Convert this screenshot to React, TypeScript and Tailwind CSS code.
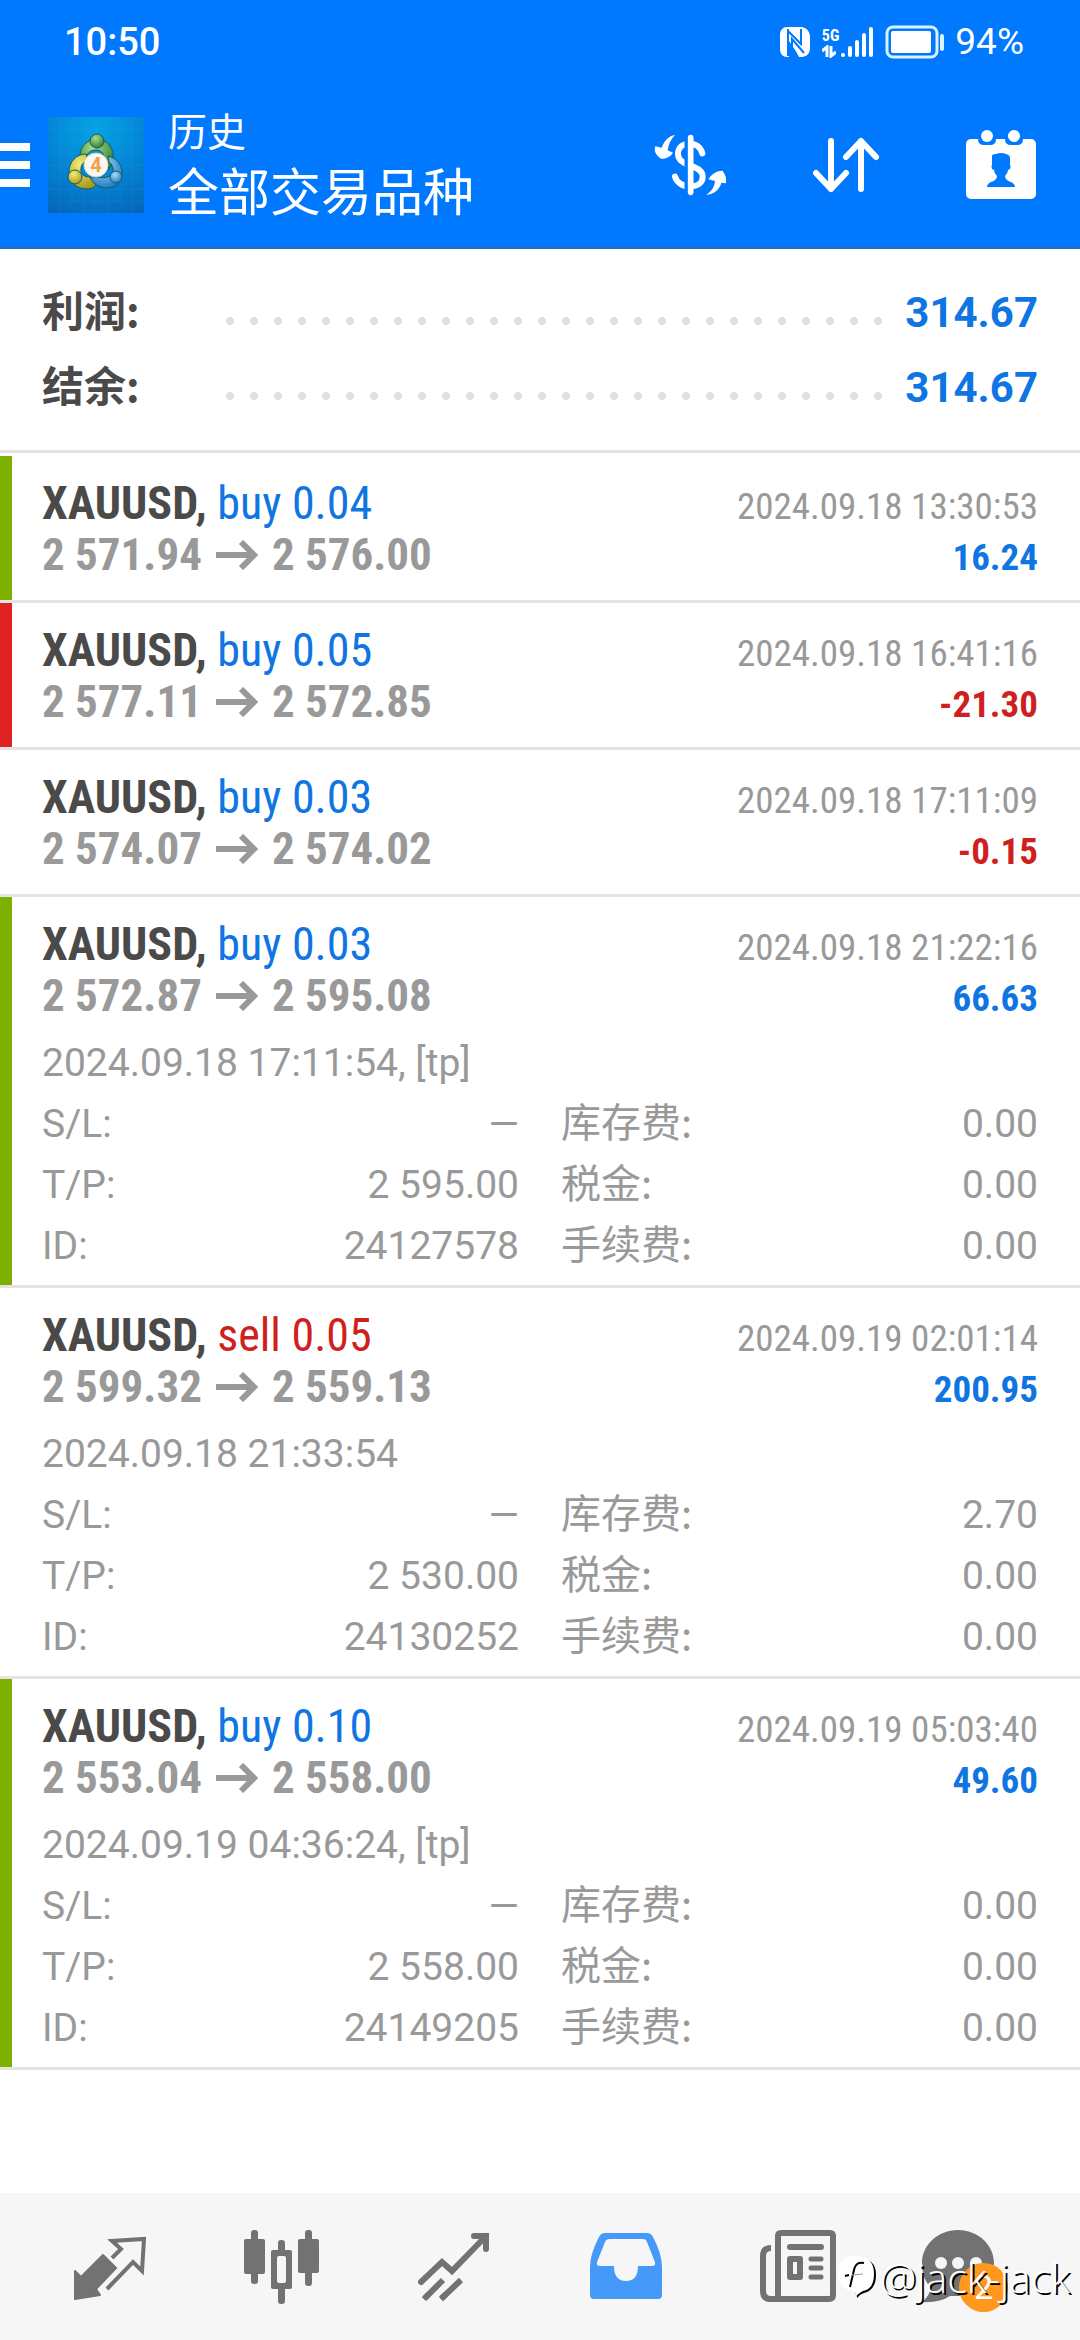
import type { ReactNode } from "react"

type Deal = {
  type: "buy" | "sell"
  volume: string
  open: string
  close: string
  closedAt: string
  profit: string
  mark?: "green" | "red"
  details?: {
    openedAt: string
    sl: string
    tp: string
    id: string
    swap: string
    tax: string
    commission: string
  }
}

const deals: Deal[] = [
  { type: "buy", volume: "0.04", open: "2 571.94", close: "2 576.00", closedAt: "2024.09.18 13:30:53", profit: "16.24", mark: "green" },
  { type: "buy", volume: "0.05", open: "2 577.11", close: "2 572.85", closedAt: "2024.09.18 16:41:16", profit: "-21.30", mark: "red" },
  { type: "buy", volume: "0.03", open: "2 574.07", close: "2 574.02", closedAt: "2024.09.18 17:11:09", profit: "-0.15" },
  {
    type: "buy", volume: "0.03", open: "2 572.87", close: "2 595.08", closedAt: "2024.09.18 21:22:16", profit: "66.63", mark: "green",
    details: { openedAt: "2024.09.18 17:11:54, [tp]", sl: "—", tp: "2 595.00", id: "24127578", swap: "0.00", tax: "0.00", commission: "0.00" },
  },
  {
    type: "sell", volume: "0.05", open: "2 599.32", close: "2 559.13", closedAt: "2024.09.19 02:01:14", profit: "200.95",
    details: { openedAt: "2024.09.18 21:33:54", sl: "—", tp: "2 530.00", id: "24130252", swap: "2.70", tax: "0.00", commission: "0.00" },
  },
  {
    type: "buy", volume: "0.10", open: "2 553.04", close: "2 558.00", closedAt: "2024.09.19 05:03:40", profit: "49.60", mark: "green",
    details: { openedAt: "2024.09.19 04:36:24, [tp]", sl: "—", tp: "2 558.00", id: "24149205", swap: "0.00", tax: "0.00", commission: "0.00" },
  },
]

const markColors = {
  green: "border-[#7eb000]",
  red: "border-[#e02222]",
}

const StatusBar = () => (
  <div className="flex h-[84px] items-center justify-between pr-14 pl-16 text-white">
    <span className="text-[38px] leading-[84px] font-medium">10:50</span>
    <div className="flex items-center">
      {/* NFC */}
      <svg width="30" height="30" viewBox="0 0 30 30" className="mr-3">
        <path fill="#fff" d="M7 0h13c6 0 10 4 10 10v11c0 5-3 9-9 9h-2L7 6v24C3 30 0 27 0 22V8c0-5 3-8 7-8Z" />
        <path fill="#fff" d="M7 0h3l11 14V0h2v30h-3L9 14v16H7z" />
        <path fill="none" stroke="#0079ff" strokeWidth="2" d="M8 2v27M8 4l13 13V2M12 28V12l12 14" />
      </svg>
      <div className="flex flex-col">
        <span className="font-['Roboto_Condensed',sans-serif] text-[16px] leading-[18px] font-bold">5G</span>
        <svg width="14" height="13" viewBox="0 0 14 13" fill="none" stroke="#fff" strokeWidth="3">
          <path d="M5 12V2L0 6M9 1v10l5-4" />
        </svg>
      </div>
      <svg width="34" height="32" viewBox="0 0 34 32" stroke="#fff" strokeWidth="4" strokeLinecap="round" className="mr-3">
        <path d="M4 29v0M11 22v7M18 16v13M25 9v20M32 3v26" />
      </svg>
      <svg width="60" height="34" viewBox="0 0 60 34" className="mr-2.5">
        <rect x="2" y="2" width="50" height="30" rx="6" fill="none" stroke="#d9f3ff" strokeWidth="3" />
        <rect x="6" y="6" width="40" height="22" rx="2" fill="#fff" />
        <rect x="55" y="9" width="4" height="17" rx="2" fill="#d9f3ff" />
      </svg>
      <span className="text-[37px] leading-[84px]">94%</span>
    </div>
  </div>
)

const AppLogo = () => (
  <svg width="96" height="96" viewBox="0 0 96 96">
    <defs>
      <radialGradient id="logoBg" cx="50%" cy="10%" r="100%">
        <stop offset="0" stopColor="#04a3e6" />
        <stop offset="0.5" stopColor="#0486d6" />
        <stop offset="1" stopColor="#0566b8" />
      </radialGradient>
      <radialGradient id="logoGreen" cx="40%" cy="30%" r="75%">
        <stop offset="0" stopColor="#a9dc8c" />
        <stop offset="1" stopColor="#2d7d28" />
      </radialGradient>
      <radialGradient id="logoYellow" cx="40%" cy="30%" r="75%">
        <stop offset="0" stopColor="#f6ee7a" />
        <stop offset="1" stopColor="#a39718" />
      </radialGradient>
      <radialGradient id="logoBlue" cx="40%" cy="30%" r="75%">
        <stop offset="0" stopColor="#a5dcfa" />
        <stop offset="1" stopColor="#1c76bd" />
      </radialGradient>
    </defs>
    <rect width="96" height="96" fill="url(#logoBg)" />
    <path stroke="#39b5ee" strokeWidth="1" opacity="0.12" d="M0 12h96M0 24h96M0 36h96M0 48h96M0 60h96M0 72h96M0 84h96M12 0v96M24 0v96M36 0v96M48 0v96M60 0v96M72 0v96M84 0v96" />
    <g stroke="#145a6b" strokeWidth="1">
      <path fill="url(#logoGreen)" d="M32 42c-1-12 7-20 17-20s18 9 16 21c-1 5-3 8-5 10l-5-6c3-9-1-14-7-14s-10 4-10 9Z" />
      <path fill="url(#logoYellow)" d="M38 37c-10 0-17 8-17 18 0 11 8 17 18 17 4 0 8-2 9-4l-6-8c-6 0-10-3-9-8 0-5 3-8 8-7Z" />
      <path fill="url(#logoBlue)" d="M60 39c9 2 14 9 14 17 0 9-6 15-15 15-8 0-14-4-17-11l8 0c6 2 13 0 15-5 1-4-1-8-4-10Z" />
      <circle cx="49" cy="24" r="7" fill="url(#logoGreen)" />
      <circle cx="27" cy="60" r="7" fill="url(#logoYellow)" />
      <circle cx="68" cy="60" r="6" fill="url(#logoBlue)" />
      <circle cx="48" cy="48" r="12" fill="#fbf8f2" stroke="#d7cfb8" />
    </g>
    <text x="48" y="55" textAnchor="middle" fontSize="20" fontWeight="700" fontFamily="Roboto, sans-serif" fill="#f3a04c">4</text>
  </svg>
)

const Header = () => (
  <header className="border-b-[3px] border-[#1a70cf] bg-[#0079ff]">
    <StatusBar />
    <div className="flex h-[162px] items-center pr-11">
      <button type="button" aria-label="菜单" className="mr-[18px]">
        <svg width="30" height="44" viewBox="0 0 30 44" fill="#fff">
          <path d="M0 0h30v8H0zM0 18h30v8H0zM0 36h30v8H0z" />
        </svg>
      </button>
      <AppLogo />
      <div className="ml-6 flex-1 text-white">
        <p className="text-[39px] leading-[58px]">历史</p>
        <h1 className="text-[51px] leading-[64px]">全部交易品种</h1>
      </div>
      <div className="flex items-center gap-[87px]">
        <button type="button" aria-label="货币">
          <svg width="72" height="62" viewBox="41 42 216 186">
            <path fill="#fff" d="M104 45C86 48 72 61 64 83L45 79C39 94 50 110 63 116C78 117 91 109 98 98L82 91C84 73 92 57 104 45Z" />
            <path fill="#fff" d="M198 224C215 213 222 201 224 183L204 178C214 162 230 152 246 152C255 162 260 178 258 190L243 188C238 209 220 223 198 224Z" />
            <path fill="none" stroke="#fff" strokeWidth="18" strokeLinecap="round" d="M186 100C181 82 167 71 147 71C126 71 113 83 113 101C113 122 131 129 150 137C174 145 187 153 187 171C187 189 171 199 150 199C125 199 109 187 104 170" />
            <path stroke="#0079ff" strokeWidth="11" d="M138 55v160" />
            <path stroke="#fff" strokeWidth="17" strokeLinecap="round" d="M151 53v164" />
          </svg>
        </button>
        <button type="button" aria-label="排序">
          <svg width="66" height="56" viewBox="0 0 66 56" fill="none" stroke="#fff" strokeWidth="6" strokeLinecap="round" strokeLinejoin="round">
            <path d="M18 4v48M3 36l15 16 15-16M48 52V4M33 20L48 4l15 16" />
          </svg>
        </button>
        <button type="button" aria-label="日期">
          <svg width="70" height="70" viewBox="0 0 70 70">
            <rect y="9" width="70" height="60" rx="5" fill="#fff" />
            <g fill="#0079ff">
              <path d="M12 6h18v3q0 6-6 6h-6q-6 0-6-6zM39 6h18v3q0 6-6 6h-6q-6 0-6-6z" />
              <path d="M26 26q0-2 4-2 5-2 10 0 4 1 4 4v7q1 0 0 4l-2 1q0 3-3 6 0 4 6 6 4 2 4 5H21q0-3 4-5 6-2 6-6-3-3-3-6l-2-1q-1-4 0-4z" />
            </g>
            <circle cx="21" cy="6" r="6" fill="#fff" />
            <circle cx="48" cy="6" r="6" fill="#fff" />
          </svg>
        </button>
      </div>
    </div>
  </header>
)

const SummaryRow = ({ label, value }: { label: string; value: string }) => (
  <div className="flex items-baseline text-[42px] leading-[75px] font-bold">
    <dt className="w-44 font-['Noto_Sans_CJK_SC',sans-serif] leading-[61px] text-[#4a4a4a]">{label}</dt>
    <div className="mr-4 h-[10px] flex-1 bg-[radial-gradient(circle,#e0e0e0_4px,transparent_4px)] bg-[length:24px_8px] bg-top-left bg-repeat-x" />
    <dd className="text-[#0f75e2]">{value}</dd>
  </div>
)

const DetailRow = ({ label, value, cjk }: { label: string; value: string; cjk?: boolean }) => (
  <div className="flex items-baseline justify-between">
    <dt className={cjk ? "font-['Noto_Sans_CJK_SC',sans-serif] text-[40px] leading-[52px]" : ""}>{label}</dt>
    <dd>{value}</dd>
  </div>
)

const DealRow = ({ deal }: { deal: Deal }) => {
  const d = deal.details
  return (
    <li className="border-b-[3px] border-[#e4e4e4]">
      <div className={`border-l-[12px] pt-[22px] pr-[42px] pl-[30px] ${d ? "pb-2" : "pb-5"} ${deal.mark ? markColors[deal.mark] : "border-transparent"}`}>
        <div className="font-['Roboto_Condensed',Roboto,sans-serif] leading-[51px]">
          <div className="flex items-baseline justify-between">
            <p className="text-[46px] text-[#4a4a4a]">
              <b className="font-bold">XAUUSD,</b>{" "}
              <span className={deal.type === "buy" ? "text-[#0f75e2]" : "text-[#cf1f1f]"}>
                {deal.type} {deal.volume}
              </span>
            </p>
            <time className="text-[37px] leading-[45px] text-[#999999]">{deal.closedAt}</time>
          </div>
          <div className="flex items-baseline justify-between font-bold">
            <p className="flex items-center gap-[14px] text-[45px] text-[#999999]">
              {deal.open}
              <svg width="42" height="30" viewBox="0 0 42 30" fill="none" stroke="#999999" strokeWidth="6">
                <path d="M0 15h38M25 2l13 13-13 13" />
              </svg>
              {deal.close}
            </p>
            <span className={`text-[37px] leading-[45px] ${deal.profit.startsWith("-") ? "text-[#cf1f1f]" : "text-[#0f75e2]"}`}>{deal.profit}</span>
          </div>
        </div>
        {d && (
          <div className="pt-3 text-[39px] leading-[61px] text-[#999999]">
            <p>{d.openedAt}</p>
            <div className="grid grid-cols-2 gap-x-[42px]">
              <dl>
                <DetailRow label="S/L:" value={d.sl} />
                <DetailRow label="T/P:" value={d.tp} />
                <DetailRow label="ID:" value={d.id} />
              </dl>
              <dl>
                <DetailRow label="库存费:" value={d.swap} cjk />
                <DetailRow label="税金:" value={d.tax} cjk />
                <DetailRow label="手续费:" value={d.commission} cjk />
              </dl>
            </div>
          </div>
        )}
      </div>
    </li>
  )
}

const NavItem = ({ label, width, children, badge }: { label: string; width: number; children: ReactNode; badge?: string }) => (
  <button type="button" aria-label={label} className="flex flex-1 items-center justify-center">
    <span className="relative">
      <svg width={width} height="84" viewBox={`0 0 ${width} 84`}>
        {children}
      </svg>
      {badge && (
        <span className="absolute right-[10px] bottom-[-3px] flex size-[49px] items-center justify-center rounded-full bg-[#ff981f] text-[34px] leading-none text-white">
          {badge}
        </span>
      )}
    </span>
  </button>
)

const BottomNav = () => (
  <nav className="mt-auto flex h-[147px] bg-[#f6f6f6] px-6">
    <NavItem label="行情" width={72}>
      <path fill="#727272" stroke="#727272" strokeWidth="2" strokeLinejoin="round" d="M1 46l6 6 22-22 13 13-20 21 4 6-25 4z" />
      <path fill="none" stroke="#727272" strokeWidth="4" d="M38 33l9-9-9-8 32-2-2 32-9-9-26 27" />
    </NavItem>
    <NavItem label="图表" width={76}>
      <g fill="#727272">
        <rect y="14" width="21" height="35" rx="2" />
        <rect x="7" y="5" width="7" height="54" rx="3" />
        <rect x="54" y="14" width="21" height="34" rx="2" />
        <rect x="61" y="5" width="7" height="56" rx="3" />
        <rect x="27" y="25" width="21" height="39" rx="2" />
        <rect x="34" y="15" width="7" height="64" rx="3" />
      </g>
      <rect x="33" y="31" width="9" height="27" rx="2" fill="#f6f6f6" />
    </NavItem>
    <NavItem label="交易" width={72}>
      <g fill="none" stroke="#727272" strokeWidth="6">
        <path strokeLinecap="round" d="M3 57l21-20 10 9L68 11M56 11h12v13" />
        <path d="M6 74l19-19M23 74l20-19" />
        <path strokeLinecap="round" d="M8 72l2-2M25 72l2-2" />
      </g>
    </NavItem>
    <NavItem label="历史" width={72}>
      <path fill="#4599f8" d="M15 8h42q4 0 6 4 9 17 9 30v28q0 4-4 4H4q-4 0-4-4V42Q0 29 9 12q2-4 6-4z" />
      <path fill="#f6f6f6" d="M20 14h33q3 0 4 3l8 20q1 4-3 4H48q0 15-12 15T24 41H10q-4 0-3-4l8-20q1-3 5-3z" />
    </NavItem>
    <NavItem label="新闻" width={76}>
      <g fill="none" stroke="#727272" strokeWidth="6">
        <path d="M11 23q-8 0-8 8v35q0 8 8 8h58q4 0 4-4V11q0-3-3-3H21q-3 0-3 3v62" />
        <path strokeLinecap="round" strokeWidth="6" d="M30 22h31" />
        <path strokeLinecap="round" strokeWidth="5" d="M51 34h10M51 43h10M51 52h10" />
        <rect x="30" y="34" width="10" height="18" strokeLinejoin="round" />
      </g>
    </NavItem>
    <NavItem label="消息" width={96} badge="2">
      <path fill="#727272" d="M36 5c20 0 36 15 36 33S56 71 36 71h-8q-10 7-28 6 9-7 8-15-8-9-8-24C0 20 16 5 36 5z" />
      <g fill="#f6f6f6">
        <circle cx="19" cy="38" r="6" />
        <circle cx="36" cy="38" r="6" />
        <circle cx="54" cy="38" r="6" />
      </g>
    </NavItem>
  </nav>
)

const Watermark = () => (
  <div className="absolute right-[10px] bottom-[38px] flex items-center gap-1 text-white">
    <svg width="38" height="44" viewBox="0 0 38 44">
      <path fill="#000" d="M20 3q18 0 18 17 0 15-12 18-4 1-7 5 0-4-2-5z" />
      <path fill="#fff" d="M18 1q18 0 18 18 0 15-11 17-4 2-7 5 0-4-3-5Q0 34 0 18 0 1 18 1z" />
      <path fill="none" stroke="#000" strokeWidth="2" d="M26 8q-8-2-10 7l-4 17M7 21l4-1" />
      <path fill="none" stroke="#999" strokeWidth="1" d="M14 20l11-1" />
    </svg>
    <span className="font-['Open_Sans','Noto_Sans',sans-serif] text-[41px] leading-[50px] font-light [text-shadow:2px_2px_0_#000]">@jack-jack</span>
  </div>
)

export default function App() {
  return (
    <div className="relative flex min-h-screen flex-col bg-white font-[Roboto,'Noto_Sans_CJK_SC',sans-serif]">
      <Header />
      <main>
        <dl className="border-b-[3px] border-[#e4e4e4] px-[42px] pt-[26px] pb-[25px]">
          <SummaryRow label="利润:" value="314.67" />
          <SummaryRow label="结余:" value="314.67" />
        </dl>
        <ul className="pt-[3px]">
          {deals.map((deal) => (
            <DealRow key={deal.closedAt} deal={deal} />
          ))}
        </ul>
      </main>
      <BottomNav />
      <Watermark />
    </div>
  )
}
